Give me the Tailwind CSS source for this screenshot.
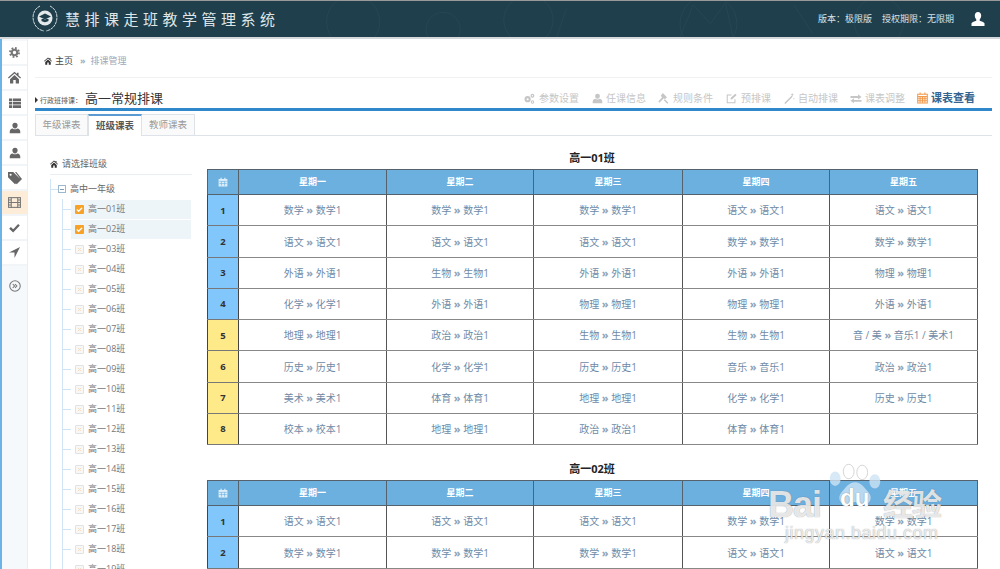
<!DOCTYPE html>
<html lang="zh-CN">
<head>
    <meta charset="UTF-8">
    <title>慧排课走班教学管理系统</title>
    <script src="https://cdn.jsdelivr.net/npm/@tailwindcss/browser@4"></script>
</head>
<body class="relative h-[569px] overflow-hidden bg-white font-['Open_Sans','Noto_Sans_CJK_SC',sans-serif] text-[10px] text-[#666]">

    <!-- Top bar -->
    <header class="relative flex h-[39px] items-center overflow-hidden border-t border-b-2 border-t-[#999] border-b-[#d5d8da] bg-[#1f3f4c] pl-[32px] pr-[15px] text-white">
        <svg class="absolute left-0 top-0 h-full w-full opacity-[0.035]" viewBox="0 0 1000 38" fill="none" stroke="#fff">
            <circle cx="345" cy="22" r="28"/><circle cx="530" cy="20" r="26"/><circle cx="720" cy="24" r="30"/><circle cx="900" cy="22" r="26"/><circle cx="440" cy="30" r="18"/><path d="M690 38l14-34 18 20 16-22 8 36M560 38l10-30M810 4l20 30"/>
        </svg>
        <svg class="relative h-[30px] w-[26px] shrink-0" viewBox="0 0 26 30" fill="none" stroke="#cfd8db">
            <path d="M8 2C2 5 0 11 1.500 17 3 23 7 26 12 27M18 2c6 3 8 9 6.500 15-1.500 6-5.500 9-10.500 10" stroke-width="1" stroke-dasharray="3 .6"/>
            <circle cx="13" cy="14" r="7.500" fill="#e3e8ea" stroke="none"/>
            <path d="M13 9.500l6 3-6 3-6-3zM9.500 15v2c2 1.500 5 1.500 7 0v-2" fill="#1f3f4c" stroke="none"/>
        </svg>
        <div class="relative ml-[7px] text-[15px] leading-none tracking-[4.5px] text-[#dfe6e8]">慧排课走班教学管理系统</div>
        <div class="relative ml-auto flex items-center text-[9px] text-[#d8e2e6]">
            <span>版本：极限版</span>
            <span class="ml-[10px]">授权期限：无限期</span>
            <svg class="ml-[17px] h-[14px] w-[14px]" viewBox="0 0 14 14" fill="#fff"><path d="M7 0c2 0 3.200 1.500 3.200 3.600 0 1.500-.6 3-1.500 3.800v1.300c1.600.7 4.300 1.300 4.800 2.600V14H.5v-2.700c.5-1.300 3.200-1.900 4.800-2.600V7.400C4.400 6.600 3.800 5.100 3.800 3.600 3.800 1.500 5 0 7 0z"/></svg>
        </div>
    </header>

    <div class="flex h-[530px]">
        <!-- Icon rail -->
        <aside class="w-[28px] shrink-0 border-r border-l-2 border-r-[#eceff2] border-l-[#6db3e8] bg-[#f6f9fb] pt-[2px] text-[#666]">
            <div class="flex h-[25px] items-center justify-center border-b-2 border-[#f2f5f7] bg-white">
                <svg class="h-[11px] w-[11px]" viewBox="0 0 16 16" fill="none" stroke="#777"><circle cx="8" cy="8" r="4" stroke-width="3"/><circle cx="8" cy="8" r="6.600" stroke-width="2.600" stroke-dasharray="2.600 2.580"/></svg>
            </div>
            <div class="flex h-[25px] items-center justify-center border-b-2 border-[#f2f5f7] bg-white">
                <svg class="h-[13px] w-[13px]" viewBox="0 0 16 16" fill="#666"><path d="M8 1L0 8l1 1.200L8 3.200l7 6L16 8l-3-2.600V2h-2v1.700zM2.500 10v5.500h4V11h3v4.500h4V10L8 5z"/></svg>
            </div>
            <div class="flex h-[25px] items-center justify-center border-b-2 border-[#f2f5f7] bg-white">
                <svg class="h-[12px] w-[12px]" viewBox="0 0 16 16" fill="#666"><path d="M0 2h4v3.500H0zM5 2h11v3.500H5zM0 6.500h4V10H0zM5 6.500h11V10H5zM0 11h4v3.500H0zM5 11h11v3.500H5z"/></svg>
            </div>
            <div class="flex h-[25px] items-center justify-center border-b-2 border-[#f2f5f7] bg-white">
                <svg class="h-[12px] w-[12px]" viewBox="0 0 16 16" fill="#666"><path d="M8 1a3.500 3.500 0 013.500 3.500c0 2-1.500 4-3.500 4s-3.500-2-3.500-4A3.500 3.500 0 018 1zM5 8.500c1.800 1.500 4.200 1.500 6 0 2.500.4 4 1.800 4 4V15H1v-2.500c0-2.200 1.500-3.600 4-4z"/></svg>
            </div>
            <div class="flex h-[25px] items-center justify-center border-b-2 border-[#f2f5f7] bg-white">
                <svg class="h-[12px] w-[12px]" viewBox="0 0 16 16" fill="#666"><path d="M8 1a3.500 3.500 0 013.500 3.500c0 2-1.500 4-3.500 4s-3.500-2-3.500-4A3.500 3.500 0 018 1zM5 8.500c1.800 1.500 4.200 1.500 6 0 2.500.4 4 1.800 4 4V15H1v-2.500c0-2.200 1.500-3.600 4-4z"/></svg>
            </div>
            <div class="flex h-[25px] items-center justify-center border-b-2 border-[#f2f5f7] bg-white">
                <svg class="h-[14px] w-[14px]" viewBox="0 0 16 16" fill="#666"><path d="M0 1h6l8 8-6 6-8-8zM3 3a1.200 1.200 0 100 2.400A1.200 1.200 0 003 3zM8 1h1.500l6.500 8-6 6-1-1 5-5z"/></svg>
            </div>
            <div class="flex h-[25px] items-center justify-center border-b-2 border-[#f2f5f7] bg-[#fdecd8]">
                <svg class="h-[13px] w-[13px]" viewBox="0 0 16 16" fill="none" stroke="#777" stroke-width="1.300"><rect x=".7" y="2" width="14.600" height="12"/><path d="M4 2v12M12 2v12M.7 8h14.600M.7 5h3.300M.7 11h3.300M12 5h3.300M12 11h3.300"/></svg>
            </div>
            <div class="flex h-[25px] items-center justify-center border-b-2 border-[#f2f5f7] bg-white">
                <svg class="h-[11px] w-[11px]" viewBox="0 0 16 16" fill="none" stroke="#666" stroke-width="3.400"><path d="M1.500 8.500l4.500 4.500 8.500-9"/></svg>
            </div>
            <div class="flex h-[25px] items-center justify-center border-b-2 border-[#f2f5f7] bg-white">
                <svg class="h-[11px] w-[11px]" viewBox="0 0 16 16" fill="#666"><path d="M16 0L8 16V8H0z"/></svg>
            </div>
            <div class="flex h-[40px] items-center justify-center">
                <svg class="h-[12px] w-[12px]" viewBox="0 0 16 16" fill="none" stroke="#777" stroke-width="1.400"><circle cx="8" cy="8" r="7"/><path d="M5 5.500L7.500 8 5 10.500M8 5.500L10.500 8 8 10.500"/></svg>
            </div>
        </aside>

        <main class="min-w-0 flex-1 pl-[7px] pr-[8px]">
            <!-- Breadcrumb -->
            <div class="flex h-[39px] items-end border-b border-[#f1f1f1] pb-[10px] pl-[9px] text-[9px] leading-[12px]">
                <svg class="mb-[2px] h-[8px] w-[8px]" viewBox="0 0 16 16" fill="#333"><path d="M8 1L0 8l1 1.200L8 3.200l7 6L16 8l-3-2.600V2h-2v1.700zM2.500 10v5.500h4V11h3v4.500h4V10L8 5z"/></svg>
                <span class="ml-[3px] text-[#444]">主页</span>
                <span class="ml-[7px] font-bold text-[#a0a8b8]">»</span>
                <span class="ml-[5px] text-[#a0a8b8]">排课管理</span>
            </div>

            <!-- Title and steps -->
            <div class="flex h-[33px] items-end border-b-[3px] border-[#2e88c9] pb-[1px] pr-[17px]">
                <span class="mb-[4px] h-0 w-0 border-y-[3px] border-l-[3px] border-y-transparent border-l-[#333]"></span>
                <span class="mb-[1px] ml-[2px] w-[45px] text-[7px] leading-[10px] text-[#555]">行政班排课：</span>
                <span class="text-[13px] leading-[18px] text-[#333]">高一常规排课</span>
                <nav class="ml-auto flex items-center text-[10px] leading-[18px] text-[#c6c6c6]">
                    <svg class="mr-[4px] h-[11px] w-[12px]" viewBox="0 0 16 16" fill="#c6c6c6"><circle cx="6" cy="9" r="4.500"/><circle cx="13" cy="4" r="2.800"/><circle cx="13" cy="13" r="2.500"/><circle cx="6" cy="9" r="1.500" fill="#fff"/><circle cx="13" cy="4" r="1" fill="#fff"/><circle cx="13" cy="13" r="1" fill="#fff"/></svg>
                    <span>参数设置</span>
                    <svg class="ml-[13px] mr-[3px] h-[11px] w-[11px]" viewBox="0 0 16 16" fill="#c6c6c6"><path d="M8 1a3.500 3.500 0 013.500 3.500c0 2-1.500 4-3.500 4s-3.500-2-3.500-4A3.500 3.500 0 018 1zM5 8.500c1.800 1.500 4.200 1.500 6 0 2.500.4 4 1.800 4 4V15H1v-2.500c0-2.200 1.500-3.600 4-4z"/></svg>
                    <span>任课信息</span>
                    <svg class="ml-[12px] mr-[4px] h-[11px] w-[11px]" viewBox="0 0 16 16" fill="#c6c6c6"><path d="M7 0l6 6-3 3-1.500-1.500L2 14 .5 12.500 6 6 4 4zM10 9l5 5-1.500 1.500-5-5z"/></svg>
                    <span>规则条件</span>
                    <svg class="ml-[13px] mr-[4px] h-[11px] w-[11px]" viewBox="0 0 16 16" fill="none" stroke="#c6c6c6" stroke-width="1.500"><path d="M13 9v5.200H1.800V3H8"/><path d="M6.500 9.500l.5-2.500L13.500 1l2 2-6.500 6z" fill="#c6c6c6" stroke="none"/></svg>
                    <span>预排课</span>
                    <svg class="ml-[13px] mr-[3px] h-[11px] w-[11px]" viewBox="0 0 16 16" fill="#c6c6c6"><path d="M11 4l1.500 1.500L2 16 .5 14.500zM12 0l.7 1.800L14.500 2.500 12.700 3.200 12 5l-.7-1.800L9.500 2.500l1.800-.7zM14.500 7l.4 1.100 1.100.4-1.100.4-.4 1.100-.4-1.100-1.100-.4 1.100-.4z"/></svg>
                    <span>自动排课</span>
                    <svg class="ml-[12px] mr-[3px] h-[11px] w-[12px]" viewBox="0 0 16 16" fill="#c6c6c6"><path d="M0 4h11V1.500L16 5.500l-5 4V7H0zM16 10H5V7.500L0 11.500l5 3.500V13h11z" transform="translate(0 .5) scale(1 .95)"/></svg>
                    <span>课表调整</span>
                    <svg class="ml-[12px] mr-[3px] h-[12px] w-[11px]" viewBox="0 0 16 16" fill="none" stroke="#f39a4c" stroke-width="1.500"><rect x="1" y="2.500" width="14" height="12.800"/><path d="M1 6h14M1 9h14M1 12h14M4.500 6v9M8 6v9M11.500 6v9M4.500 0v3M11.500 0v3"/></svg>
                    <span class="text-[11px] font-bold text-[#34648f]">课表查看</span>
                </nav>
            </div>

            <!-- Tabs -->
            <div class="mt-[3px] flex h-[22px] border-b border-[#dde3e8] text-[9.5px] leading-[20px]">
                <div class="w-[53px] border border-b-0 border-[#dde3e8] bg-[#fafafa] text-center text-[#999]">年级课表</div>
                <div class="-mb-px w-[54px] border-x border-t-2 border-x-[#dde3e8] border-t-[#5b9bd1] bg-white text-center font-bold text-[#555]">班级课表</div>
                <div class="w-[53px] border border-b-0 border-l-0 border-[#dde3e8] bg-[#fafafa] text-center text-[#999]">教师课表</div>
            </div>

            <div class="flex pl-[15px] pr-[15px]">
                <!-- Class tree -->
                <section class="w-[142px] shrink-0 pt-[22px]">
                    <div class="flex h-[17px] items-start border-b border-[#e9eef1] text-[9px] leading-[12px]">
                        <svg class="mt-[2px] h-[8px] w-[8px]" viewBox="0 0 16 16" fill="#333"><path d="M8 1L0 8l1 1.200L8 3.200l7 6L16 8l-3-2.600V2h-2v1.700zM2.500 10v5.500h4V11h3v4.500h4V10L8 5z"/></svg>
                        <span class="ml-[4px] text-[#666]">请选择班级</span>
                    </div>
                    <div class="mt-[4px] border-l border-[#cfe4f4]">
                        <div class="flex h-[20px] items-center text-[9px]">
                            <span class="h-px w-[7px] bg-[#cfe4f4]"></span>
                            <span class="flex h-[8px] w-[8px] items-center justify-center border border-[#9db8cc]"><span class="h-px w-[4px] bg-[#7f9db5]"></span></span>
                            <span class="ml-[4px] text-[#666]">高中一年级</span>
                        </div>
                        <div id="tree" class="ml-[11px] border-l border-[#cfe4f4]"></div>
                    </div>
                </section>

                <!-- Timetables -->
                <section id="tables" class="ml-[15px] min-w-0 flex-1"></section>
            </div>
        </main>
    </div>

    <!-- Baidu watermark -->
    <div class="pointer-events-none absolute left-[768px] top-[460px] h-[85px] w-[185px] text-white/80 [text-shadow:0_0_1px_rgba(80,80,80,0.7)]">
        <svg class="absolute left-[60px] top-[2px] h-[46px] w-[54px]" viewBox="0 0 60 46" fill="rgba(205,228,245,0.8)">
            <ellipse cx="8" cy="16" rx="6" ry="8"/><ellipse cx="23" cy="8" rx="6" ry="8" fill="none" stroke="rgba(190,190,190,0.7)"/><ellipse cx="38" cy="9" rx="6" ry="8" fill="none" stroke="rgba(190,190,190,0.7)"/><ellipse cx="52" cy="19" rx="6" ry="8"/><path d="M30 20c7 0 10 6 15 11 5 6 2 14-6 13-4 0-6-2-9-2s-5 2-9 2c-8 1-11-7-6-13 5-5 8-11 15-11z"/>
        </svg>
        <span class="absolute left-0 top-[27px] font-['Liberation_Sans',sans-serif] text-[36px] font-bold leading-none tracking-[-1px]">Bai</span>
        <span class="absolute left-[72px] top-[26px] font-['Liberation_Sans',sans-serif] text-[24px] font-bold leading-none text-white">du</span>
        <span class="absolute left-[115px] top-[29px] text-[30px] font-bold leading-none tracking-[-1px]">经验</span>
        <span class="absolute left-[17px] top-[64px] font-['Liberation_Sans',sans-serif] text-[18px] leading-none tracking-[0.5px]">jingyan.baidu.com</span>
    </div>

    <script>
        // 班级列表
        let treeHtml = '';
        for (let i = 1; i <= 20; i++) {
            const name = '高一' + String(i).padStart(2, '0') + '班';
            const checked = i <= 2;
            treeHtml += '<div class="flex h-[20px] items-center text-[9px]">'
                + '<span class="h-px w-[8px] bg-[#cfe4f4]"></span>'
                + '<div class="flex h-[19px] w-[120px] items-center ' + (checked ? 'bg-[#eef5f9]' : '') + '">'
                + (checked
                    ? '<span class="ml-[4px] flex h-[9px] w-[9px] items-center justify-center rounded-[1px] bg-[#f7a128]"><svg class="h-[7px] w-[7px]" viewBox="0 0 8 8" fill="none" stroke="#fff" stroke-width="1.500"><path d="M1 4l2 2 4-4"/></svg></span>'
                    : '<span class="ml-[4px] flex h-[9px] w-[9px] items-center justify-center rounded-[1px] border border-[#e2e2e2] bg-[#f8f8f8]"><svg class="h-[5px] w-[5px]" viewBox="0 0 6 6" stroke="#f8dcc0" stroke-width="1.200"><path d="M1 1l4 4M5 1L1 5"/></svg></span>')
                + '<span class="ml-[4px] text-[#777]">' + name + '</span></div></div>';
        }
        document.getElementById('tree').innerHTML = treeHtml;

        // 课表数据
        const one = [
            ['数学', '数学', '数学', '语文', '语文'],
            ['语文', '语文', '语文', '数学', '数学'],
            ['外语', '生物', '外语', '外语', '物理'],
            ['化学', '外语', '物理', '物理', '外语'],
            ['地理', '政治', '生物', '生物', '音 / 美 » 音乐1 / 美术1'],
            ['历史', '化学', '历史', '音乐', '政治'],
            ['美术', '体育', '地理', '化学', '历史'],
            ['校本', '地理', '政治', '体育', '']
        ];
        const two = [
            ['语文', '语文', '语文', '数学', '数学'],
            ['数学', '数学', '数学', '语文', '语文'],
            ['外语', '外语', '生物', '物理', '外语']
        ];
        const days = ['星期一', '星期二', '星期三', '星期四', '星期五'];
        const arrow = '<span class="text-[11px] font-bold text-[#8ea3b8]">»</span>';

        function cellText(s) {
            if (!s) return '';
            if (s.includes('»')) return s.replace('»', arrow);
            return s + ' ' + arrow + ' ' + s + '1';
        }

        function buildTable(title, rows, marginClass) {
            let html = '<h3 class="' + marginClass + ' text-center text-[11px] font-bold leading-[16px] text-[#222]">' + title + '</h3>';
            html += '<table class="mt-[3px] w-[770px] table-fixed border-collapse"><colgroup><col class="w-[31px]"><col class="w-[148px]"><col class="w-[147px]"><col class="w-[149px]"><col class="w-[147px]"><col class="w-[148px]"></colgroup><thead><tr class="h-[25px] bg-[#6cb0e0] text-[9px] font-bold text-white">';
            html += '<th class="border border-[#55626c]"><svg class="mx-auto h-[10px] w-[10px]" viewBox="0 0 16 16" fill="#dceefa"><path d="M1 3h14v12H1zM4 1h2v3H4zM10 1h2v3h-2z"/><path d="M2 7h12M5.500 7v7M10.500 7v7M2 10.500h12" stroke="#6cb0e0"/></svg></th>';
            days.forEach(d => { html += '<th class="border border-[#55626c] font-bold">' + d + '</th>'; });
            html += '</tr></thead><tbody>';
            rows.forEach((row, i) => {
                html += '<tr class="h-[31.25px]">';
                html += '<td class="border border-x-[#444] border-y-[#777] pt-px ' + (i < 4 ? 'bg-[#82c7fb]' : 'bg-[#ffea8a]') + ' text-center text-[9.5px] font-bold text-[#333]">' + (i + 1) + '</td>';
                row.forEach(c => {
                    html += '<td class="border border-x-[#555] border-y-[#888] pt-px text-center text-[10px] text-[#6f8aa6]">' + cellText(c) + '</td>';
                });
                html += '</tr>';
            });
            return html + '</tbody></table>';
        }

        document.getElementById('tables').innerHTML =
            buildTable('高一01班', one, 'mt-[14px]') + buildTable('高一02班', two, 'mt-[16px]');
    </script>
</body>
</html>
